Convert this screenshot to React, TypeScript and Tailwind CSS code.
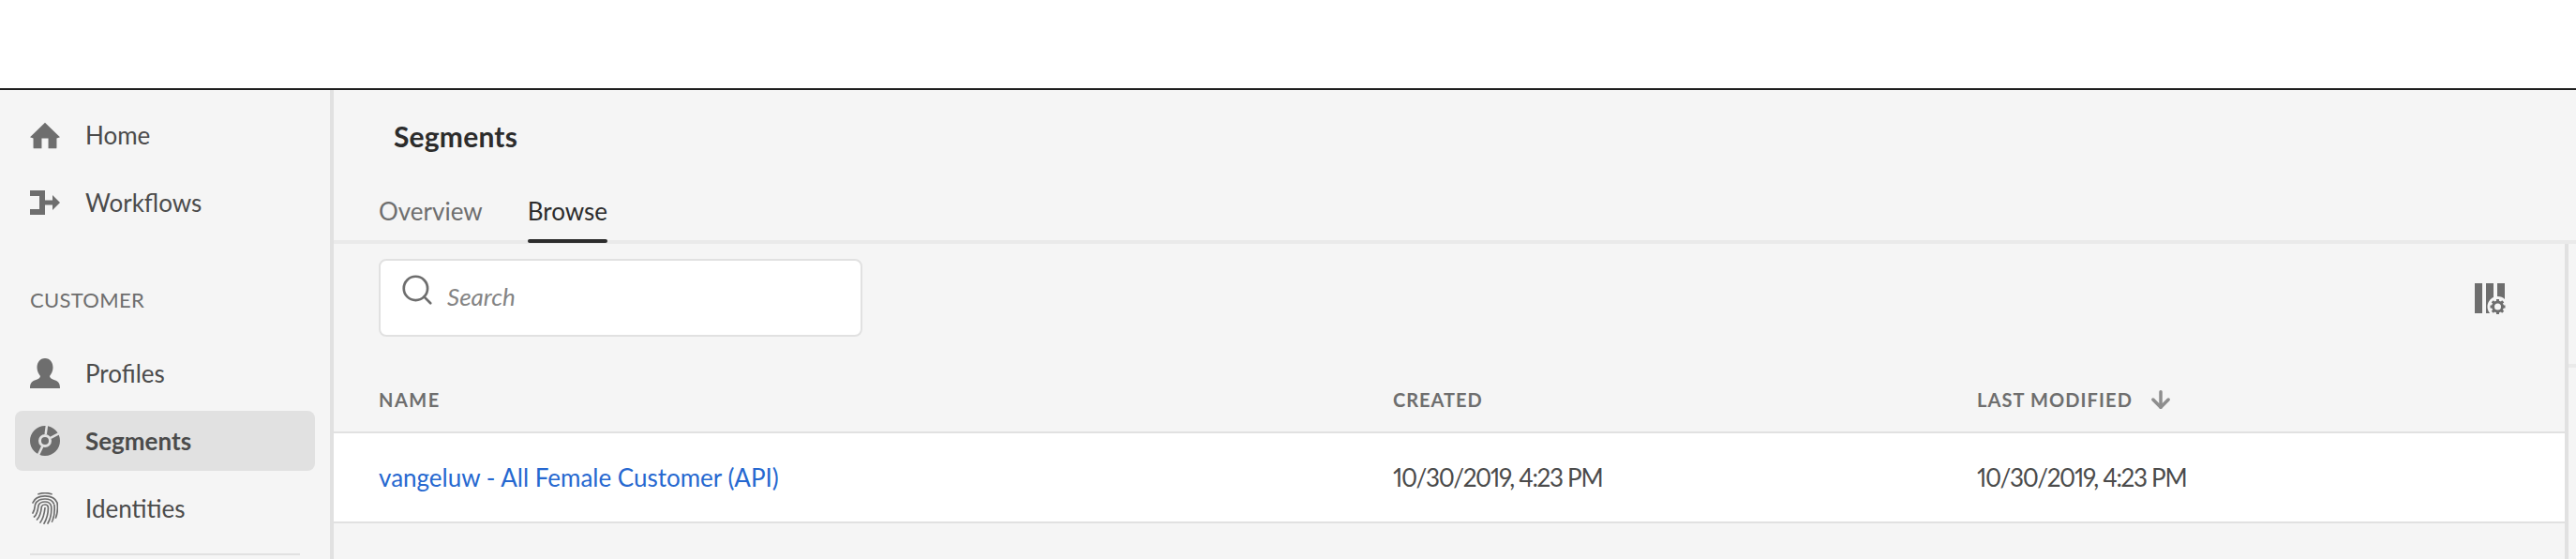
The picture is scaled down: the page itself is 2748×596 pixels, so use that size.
import { ArrowDown, Search } from 'lucide-react'

const font = "font-['Lato','Noto_Sans',sans-serif]"

function HomeIcon() {
  return (
    <svg viewBox="0 0 36 31" className="h-[31px] w-[36px]" fill="#6e6e6e">
      <path d="M18 0 L36 17.5 L32 19 V30 Q32 31 31 31 H22 V19 H14 V31 H5 Q4 31 4 30 V19 L0 17.5 Z" />
    </svg>
  )
}

function WorkflowsIcon() {
  return (
    <svg viewBox="0 0 32 26" className="h-[26px] w-[32px]" fill="#6e6e6e">
      <path d="M0 0 H16 V10.5 H24 V5 L32 13 L24 21 V15.5 H16 V26 H0 V20 H10 V6 H0 Z" />
    </svg>
  )
}

function ProfileIcon() {
  return (
    <svg viewBox="0 0 32 32" className="h-[32px] w-[32px]" fill="#6e6e6e">
      <path d="M16 0 C21.5 0 24.5 4.5 24.5 10 C24.5 14 22.5 17 21 19 C21 21 23 22 27 23.5 C30.5 25 32 27 32 32 H0 C0 27 1.5 25 5 23.5 C9 22 11 21 11 19 C9.5 17 7.5 14 7.5 10 C7.5 4.5 10.5 0 16 0 Z" />
    </svg>
  )
}

function SegmentsIcon() {
  return (
    <svg viewBox="0 0 32 32" className="h-[32px] w-[32px]">
      <circle cx="16" cy="16" r="11.5" fill="none" stroke="#6e6e6e" strokeWidth="9" />
      <path stroke="#e1e1e1" strokeWidth="2.5" d="M16.7 9 L18 -1 M22 12.8 L32 7.5 M13.5 21.4 L8.5 32" />
      <circle cx="16" cy="16" r="4" fill="#6e6e6e" />
    </svg>
  )
}

function FingerprintIcon() {
  return (
    <svg viewBox="0 0 28 34" className="h-[34px] w-[28px]" fill="none" stroke="#6e6e6e" strokeWidth="1.7" strokeLinecap="round">
      <path d="M7 1.8 C11 0.4 17 0.4 21 1.8" />
      <path d="M1 11 C3 5.5 8 3.8 14 3.8 C20 3.8 25 5.5 27 11 C27.6 15 27.4 22 25.5 27" />
      <path d="M1 22 C3 19 3.2 16 3.5 13 C5 8.5 9 7 14 7 C19 7 23 9 24 14 C24.5 20 24 26 21.5 31" strokeDasharray="16 1.6" />
      <path d="M2.5 26 C6 23 6.6 17 7 14 C8 11 11 10 14 10 C17 10 20 11.5 20.7 15 C21.2 22 20 28 17 33" />
      <path d="M5.5 29 C9 25.5 10 19 10.4 15 C11 13.5 12.5 13 14 13 C16 13 17.2 14 17.4 16 C17.6 22 16 28 13 33.2" />
      <path d="M9 32 C12 28 13.4 22 14 16.5" />
    </svg>
  )
}

function ColumnSettingsIcon() {
  return (
    <svg viewBox="0 0 36 34" className="h-[34px] w-[36px]">
      <path fill="#6e6e6e" d="M0 0 H8 V32 H0 Z M12 0 H20 V32 H12 Z M24 0 H32 V32 H24 Z" />
      <circle cx="24.5" cy="25" r="11" fill="#f5f5f5" />
      <circle cx="24.5" cy="25" r="5" fill="none" stroke="#6e6e6e" strokeWidth="3" />
      <path stroke="#6e6e6e" strokeWidth="3" d="M24.5 17 V20 M24.5 30 V33 M16.5 25 H19.5 M29.5 25 H32.5 M18.8 19.3 L21 21.5 M28 28.5 L30.2 30.7 M18.8 30.7 L21 28.5 M28 21.5 L30.2 19.3" />
    </svg>
  )
}

function NavItem({ icon, label, active }: { icon: React.ReactNode; label: string; active?: boolean }) {
  return (
    <div className={`mx-4 flex h-[64px] items-center rounded-lg pl-4 ${active ? 'bg-[#e1e1e1]' : ''}`}>
      <div className="flex w-[32px] justify-center">{icon}</div>
      <span className={`ml-[27px] text-[26px] leading-none text-[#4b4b4b] ${active ? 'font-bold' : ''}`}>{label}</span>
    </div>
  )
}

export default function App() {
  return (
    <div className={`${font} flex h-[596px] w-[2748px] flex-col overflow-hidden bg-white`}>
      <div className="h-[96px] shrink-0 border-b-2 border-[#1e1e1e] bg-white" />
      <div className="flex min-h-0 flex-1 bg-[#f5f5f5]">
        <aside className="flex w-[356px] shrink-0 flex-col border-r-4 border-[#e1e1e1] pt-[16px]">
          <div className="flex flex-col gap-[8px]">
            <NavItem icon={<HomeIcon />} label="Home" />
            <NavItem icon={<WorkflowsIcon />} label="Workflows" />
          </div>
          <div className="ml-8 mt-[61px] text-[22px] leading-none tracking-[0.3px] text-[#6e6e6e]">CUSTOMER</div>
          <div className="mt-[35px] flex flex-col gap-[8px]">
            <NavItem icon={<ProfileIcon />} label="Profiles" />
            <NavItem icon={<SegmentsIcon />} label="Segments" active />
            <NavItem icon={<FingerprintIcon />} label="Identities" />
          </div>
          <div className="mx-8 mt-[16px] h-[2px] bg-[#e1e1e1]" />
        </aside>
        <main className="flex min-w-0 flex-1 flex-col">
          <div className="h-[164px] shrink-0 border-b-4 border-[#eaeaea]">
            <h1 className="pl-[64px] pt-[31px] text-[30px] font-bold leading-[36px] tracking-[0.2px] text-[#2c2c2c]">Segments</h1>
            <div className="mt-[46px] flex gap-[48px] pl-[48px]">
              <span className="h-[46px] text-[26px] leading-[32px] text-[#6e6e6e]">Overview</span>
              <span className="relative h-[46px] text-[26px] leading-[32px] text-[#2c2c2c]">
                Browse
                <span className="absolute inset-x-0 bottom-[-4px] h-[4px] rounded-sm bg-[#2c2c2c]" />
              </span>
            </div>
          </div>
          <div className="flex min-h-0 flex-1">
            <div className="min-w-0 flex-1 border-r-4 border-[#e1e1e1]">
              <div className="flex items-start justify-between pl-[48px] pr-[60px] pt-[16px]">
                <div className="flex h-[83px] w-[516px] items-start rounded-lg border-2 border-[#e1e1e1] bg-white pl-[20px] pt-[12px]">
                  <Search size={38} strokeWidth={1.7} className="text-[#6e6e6e]" />
                  <span className="ml-[13px] mt-[13px] text-[26px] italic leading-none text-[#848484]">Search</span>
                </div>
                <div className="mt-[26px]">
                  <ColumnSettingsIcon />
                </div>
              </div>
              <div className="mt-[33px] grid h-[70px] grid-cols-[1082px_623px_1fr] items-center border-b-2 border-[#e1e1e1] pl-[48px]">
                <span className="text-[20px] font-bold tracking-[1.5px] text-[#6e6e6e]">NAME</span>
                <span className="text-[20px] font-bold tracking-[1px] text-[#6e6e6e]">CREATED</span>
                <span className="flex items-center text-[20px] font-bold tracking-[1.1px] text-[#6e6e6e]">
                  LAST MODIFIED
                  <ArrowDown size={28} strokeWidth={3} className="ml-[16px] text-[#8e8e8e]" />
                </span>
              </div>
              <div className="grid h-[96px] grid-cols-[1082px_623px_1fr] items-center border-b-2 border-[#e1e1e1] bg-white pl-[48px]">
                <a className="text-[26px] leading-none text-[#2668d0]">vangeluw - All Female Customer (API)</a>
                <span className="text-[26px] leading-none tracking-[-1.3px] text-[#4b4b4b] proportional-nums">10/30/2019, 4:23 PM</span>
                <span className="text-[26px] leading-none tracking-[-1.3px] text-[#4b4b4b] proportional-nums">10/30/2019, 4:23 PM</span>
              </div>
            </div>
            <div className="w-[8px] shrink-0">
              <div className="mt-[128px] h-[4px] bg-[#eaeaea]" />
            </div>
          </div>
        </main>
      </div>
    </div>
  )
}
